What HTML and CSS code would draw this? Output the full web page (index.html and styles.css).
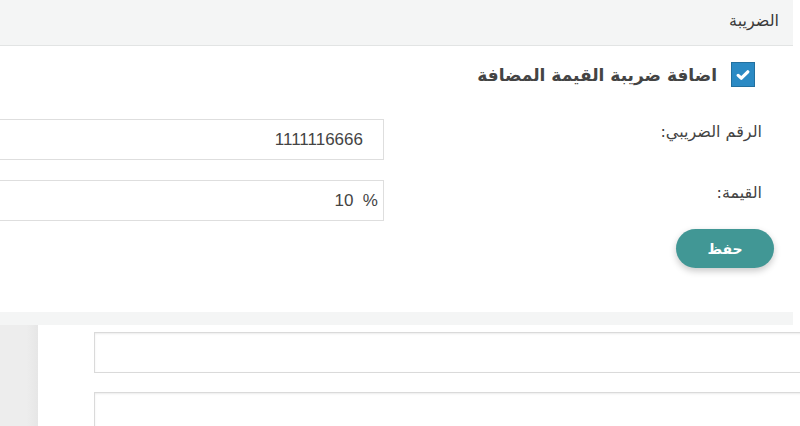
FILE: index.html
```html
<!DOCTYPE html>
<html lang="ar">
<head>
<meta charset="utf-8">
<link rel="stylesheet" href="styles.css">
</head>
<body>
<section class="panel" dir="rtl">
  <div class="panel-head">الضريبة</div>
  <div class="panel-body">
    <label class="check-row">
      <span class="check-box">
        <svg width="14" height="12" viewBox="0 0 14 12"><path d="M2.2 6.4 L5.4 9.2 L11.8 2.8" fill="none" stroke="#fff" stroke-width="3.2" stroke-linecap="round" stroke-linejoin="round"/></svg>
      </span>
      <span class="check-label">اضافة ضريبة القيمة المضافة</span>
    </label>
    <div class="form-row">
      <span class="field-label">الرقم الضريبي:</span>
      <div class="field"><span class="field-text">1111116666</span></div>
    </div>
    <div class="form-row">
      <span class="field-label">القيمة:</span>
      <div class="field field-pct"><span class="field-text" dir="ltr">10&nbsp;&nbsp;%</span></div>
    </div>
    <div class="actions"><button class="btn-save">حفظ</button></div>
  </div>
</section>
<div class="strip"></div>
<div class="lower">
  <aside class="side"></aside>
  <div class="boxes">
    <div class="box"></div>
    <div class="box"></div>
  </div>
</div>
</body>
</html>
```
FILE: styles.css
```css
html, body {
  margin: 0;
  padding: 0;
  background: #fff;
  overflow: hidden;
  height: 426px;
}
body {
  font-family: "DejaVu Sans", "Noto Sans", sans-serif;
  color: #444;
}
.panel {
  width: 793px;
  background: #fff;
}
.panel-head {
  height: 46px;
  box-sizing: border-box;
  background: #f4f5f5;
  border-bottom: 1px solid #e2e4e4;
  padding-right: 14px;
  font-size: 16px;
  line-height: 42px;
  color: #3a3a3a;
}
.panel-body {
  height: 266px;
  box-sizing: border-box;
  padding-top: 16px;
}
.check-row {
  display: flex;
  align-items: center;
  gap: 14px;
  padding-right: 38px;
  height: 25px;
}
.check-box {
  width: 22px;
  height: 23px;
  background: #2b8ac4;
  border: 1px solid #22709f;
  display: flex;
  align-items: center;
  justify-content: center;
}
.check-label {
  font-weight: bold;
  font-size: 17px;
  color: #444;
}
.form-row {
  display: flex;
  align-items: flex-start;
  height: 41px;
}
.form-row + .form-row {
  margin-top: 20px;
}
.check-row + .form-row {
  margin-top: 32px;
}
.field-label {
  width: 409px;
  box-sizing: border-box;
  padding-right: 31px;
  padding-top: 3px;
  font-size: 16px;
  color: #444;
  flex-shrink: 0;
}
.field {
  flex-shrink: 0;
  width: 440px;
  height: 41px;
  box-sizing: border-box;
  border: 1px solid #dedede;
  display: flex;
  align-items: center;
  padding-right: 20px;
  font-family: "Liberation Sans", Arial, sans-serif;
  font-size: 17px;
  color: #444;
}
.field-pct {
  padding-right: 5px;
}
.actions {
  padding-right: 19px;
  margin-top: 8px;
}
.btn-save {
  width: 98px;
  height: 39px;
  border: none;
  border-radius: 20px;
  background: #419795;
  color: #fff;
  font-family: "DejaVu Sans", sans-serif;
  font-weight: bold;
  font-size: 14px;
  box-shadow: 0 3px 7px rgba(0,0,0,0.22);
  padding: 0;
}
.strip {
  width: 793px;
  height: 13px;
  background: #f4f5f5;
}
.lower {
  display: flex;
  height: 101px;
}
.side {
  width: 38px;
  background: linear-gradient(to right, #ededed 70%, #e6e6e6);
  flex-shrink: 0;
}
.boxes {
  padding-left: 56px;
  padding-top: 7px;
  display: flex;
  flex-direction: column;
  gap: 19px;
}
.box {
  width: 720px;
  height: 41px;
  box-sizing: border-box;
  border: 1px solid #dadada;
  box-shadow: inset 0 1px 2px rgba(0,0,0,0.08);
  flex-shrink: 0;
}
```
